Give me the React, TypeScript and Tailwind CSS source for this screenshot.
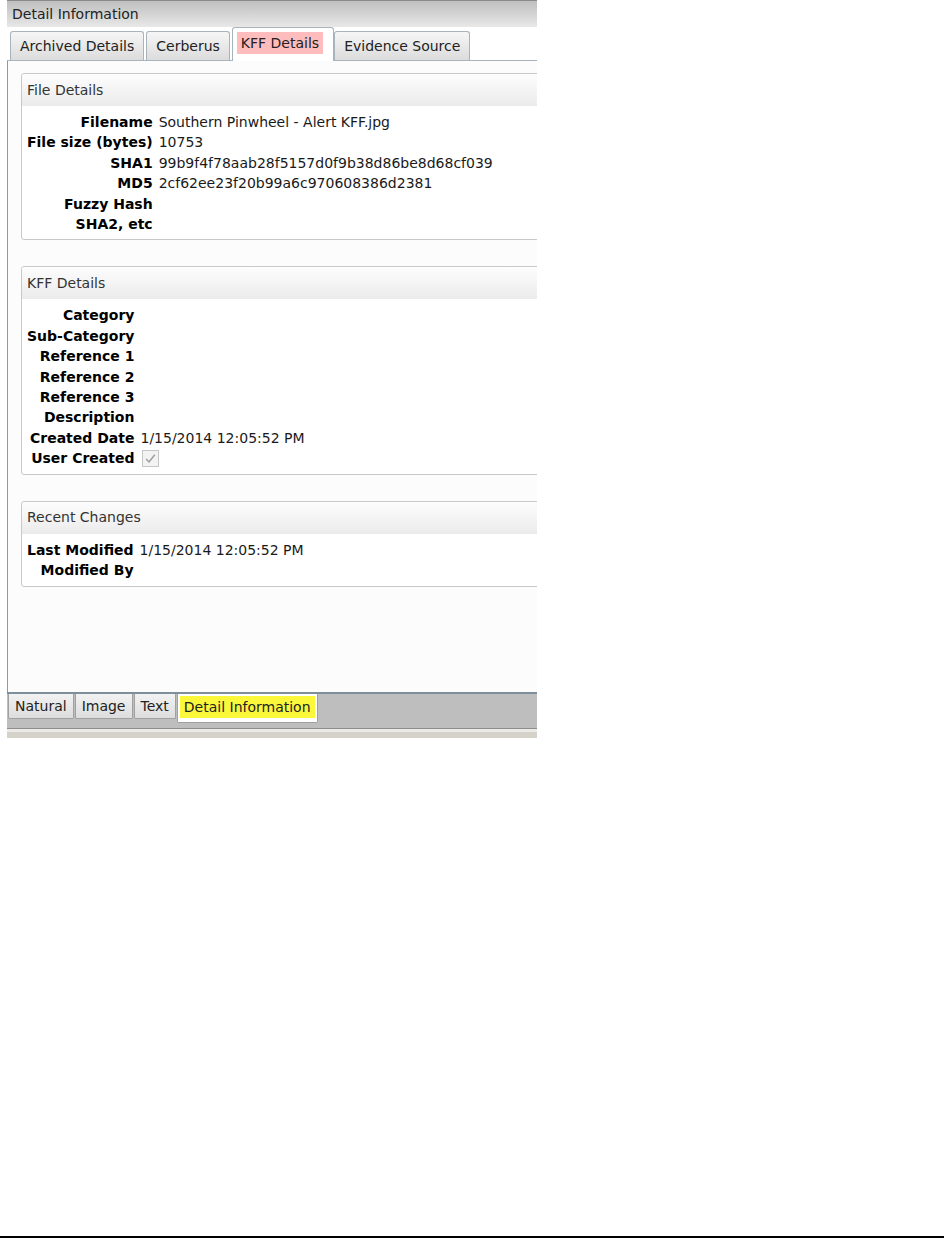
import type { ReactNode } from 'react';

type Row = { label: string; value?: ReactNode };

const fileRows: Row[] = [
  { label: 'Filename', value: 'Southern Pinwheel - Alert KFF.jpg' },
  { label: 'File size (bytes)', value: '10753' },
  { label: 'SHA1', value: '99b9f4f78aab28f5157d0f9b38d86be8d68cf039' },
  { label: 'MD5', value: '2cf62ee23f20b99a6c970608386d2381' },
  { label: 'Fuzzy Hash' },
  { label: 'SHA2, etc' },
];

function DisabledCheck() {
  return (
    <span className="mt-[2px] ml-[2px] inline-flex h-[17px] w-[17px] items-center justify-center border border-[#c6c6c6] bg-[#f3f3f3]">
      <svg width="13" height="13" viewBox="0 0 12 12">
        <path d="M2 6.5 L4.6 9.2 L10 2.5" fill="none" stroke="#9e9e9e" strokeWidth="1.4" />
      </svg>
    </span>
  );
}

const kffRows: Row[] = [
  { label: 'Category' },
  { label: 'Sub-Category' },
  { label: 'Reference 1' },
  { label: 'Reference 2' },
  { label: 'Reference 3' },
  { label: 'Description' },
  { label: 'Created Date', value: '1/15/2014 12:05:52 PM' },
  { label: 'User Created', value: <DisabledCheck /> },
];

const changeRows: Row[] = [
  { label: 'Last Modified', value: '1/15/2014 12:05:52 PM' },
  { label: 'Modified By' },
];

function Section({ title, rows, className = '' }: { title: string; rows: Row[]; className?: string }) {
  return (
    <div className={`rounded-[3px] border border-[#c9c9c9] bg-white ${className}`}>
      <div className="flex h-[32px] items-center rounded-t-[3px] bg-gradient-to-b from-[#fdfdfd] to-[#ebebeb] pl-[5px] text-[#333]">
        {title}
      </div>
      <dl className="grid grid-cols-[auto_1fr] gap-x-[6px] px-[5px] pt-[6px] pb-[5px] leading-[20.4px]">
        {rows.map((r) => (
          <div key={r.label} className="contents">
            <dt className="text-right font-bold text-black">{r.label}</dt>
            <dd className="flex items-start text-[#1a1a1a]">{r.value ?? ''}</dd>
          </div>
        ))}
      </dl>
    </div>
  );
}

const topTabs = ['Archived Details', 'Cerberus', 'KFF Details', 'Evidence Source'];
const bottomTabs = ['Natural', 'Image', 'Text', 'Detail Information'];

export default function App() {
  return (
    <div
      className="flex h-[1238px] w-[944px] flex-col bg-white text-[14px]"
      style={{ fontFamily: 'Verdana, "DejaVu Sans", sans-serif' }}
    >
      <div className="w-[537px] overflow-hidden pl-[7px]">
        <div className="w-[620px]">
          <div className="flex h-[27px] items-center border-t border-[#8a8a8a] bg-gradient-to-b from-[#bfbfbf] to-[#e8e8e8] pl-[5px] text-[#222]">
            Detail Information
          </div>

          <div className="flex h-[34px] items-end border-b border-[#a7b3bd] bg-white pl-[3px]">
            {topTabs.map((t) =>
              t === 'KFF Details' ? (
                <div
                  key={t}
                  className="relative z-10 -mb-px flex h-[34px] items-start rounded-t-[3px] border border-b-0 border-[#a7b3bd] bg-white pt-[4px] pr-[10px] pl-[4px] text-[#222]"
                >
                  <span className="bg-[#ffbcbc] px-[4px] leading-[22px]">{t}</span>
                </div>
              ) : (
                <div
                  key={t}
                  className="mr-[2px] flex h-[29px] items-center rounded-t-[3px] border border-b-0 border-[#a7b3bd] bg-gradient-to-b from-[#f6f6f6] to-[#dcdcdc] px-[9px] text-[#222]"
                >
                  {t}
                </div>
              )
            )}
          </div>

          <div className="h-[631px] border-l border-[#8d99a3] bg-[#fcfcfc] pt-[12px] pl-[13px]">
            <Section title="File Details" rows={fileRows} />
            <Section title="KFF Details" rows={kffRows} className="mt-[26px]" />
            <Section title="Recent Changes" rows={changeRows} className="mt-[26px]" />
          </div>

          <div className="h-[2px] bg-[#7e8e9a]" />
          <div className="flex h-[35px] items-start border-b border-[#8f8f8f] bg-[#bebebe] pl-[1px]">
            {bottomTabs.map((t) =>
              t === 'Detail Information' ? (
                <div
                  key={t}
                  className="flex h-[29px] items-start rounded-b-[2px] border border-t-0 border-[#a0a0a0] bg-white px-[2px] pt-[2px] text-[#222]"
                >
                  <span className="bg-[#fbf83c] px-[4px] leading-[22px]">{t}</span>
                </div>
              ) : (
                <div
                  key={t}
                  className="mr-[1px] flex h-[25px] items-center rounded-b-[2px] border border-t-0 border-[#a0a0a0] bg-gradient-to-b from-[#f2f2f2] to-[#dddddd] px-[6px] pt-[1px] text-[#222]"
                >
                  {t}
                </div>
              )
            )}
          </div>
          <div className="h-[3px] bg-[#ebeae6]" />
          <div className="h-[6px] bg-[#d5d2c9]" />
        </div>
      </div>
      <div className="mt-auto h-[2px] bg-black" />
    </div>
  );
}
